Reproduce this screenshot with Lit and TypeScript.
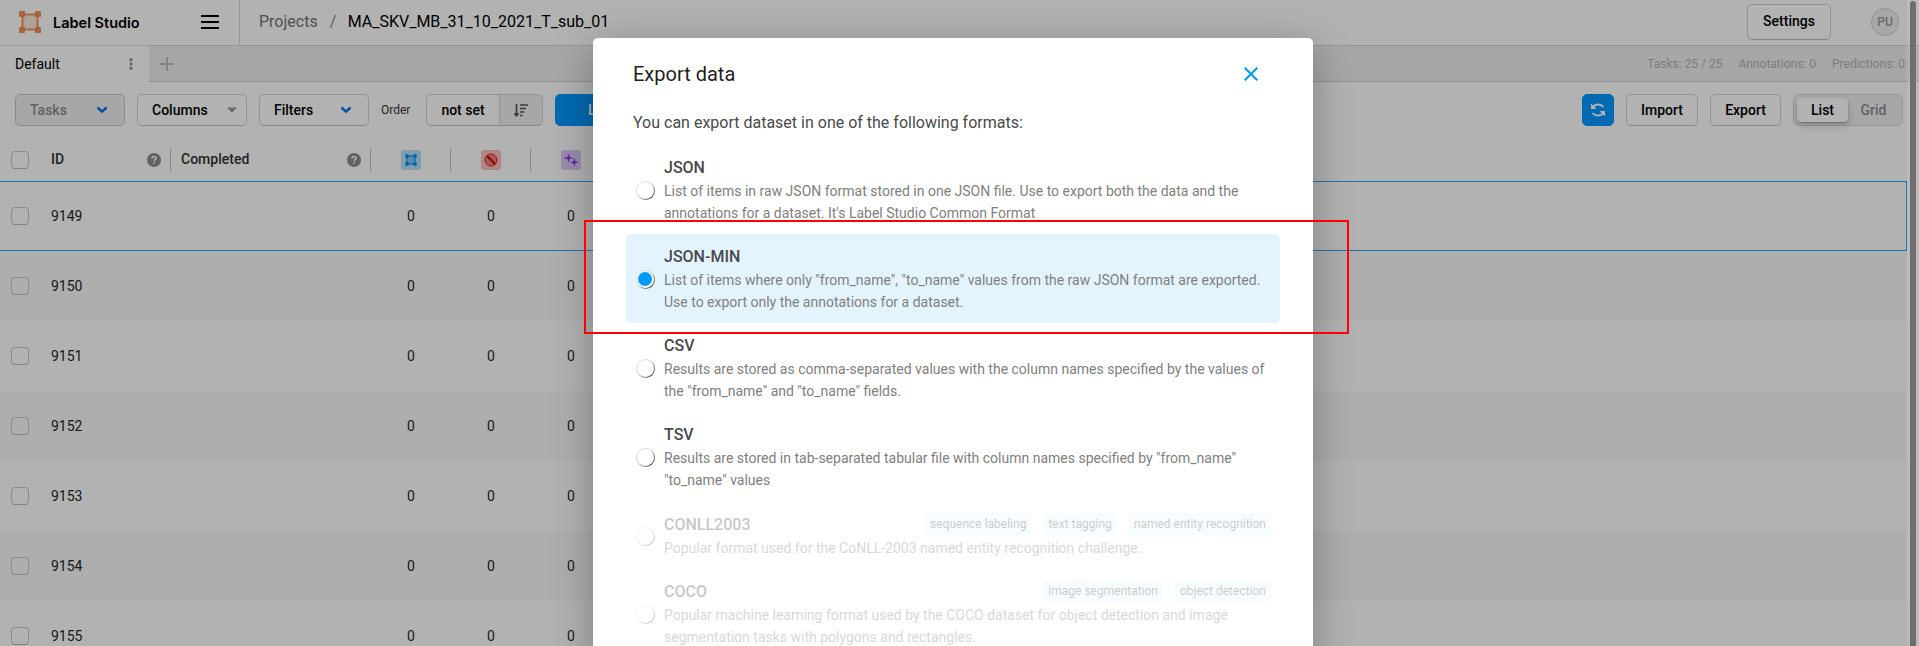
import { LitElement, html, css, svg, nothing } from "lit";
import { customElement, property } from "lit/decorators.js";

const chevron = html`<svg width="12" height="8" viewBox="0 0 12 8"><path d="M1.500 1.500 6 5.600 10.500 1.500" fill="none" stroke="#0070ff" stroke-width="2.500"/></svg>`;
const caret = html`<svg width="10" height="6" viewBox="0 0 10 6"><path d="M1 .5h8a.5.5 0 0 1 .3.8L5.6 5a.9.9 0 0 1-1.2 0L.7 1.3A.5.5 0 0 1 1 .5z" fill="#999"/></svg>`;
const help = html`<svg width="14" height="14" viewBox="0 0 14 14"><circle cx="7" cy="7" r="7" fill="#8c8c8c"/><path d="M4.900 5.400C4.900 4.100 5.800 3.400 7 3.400s2.100.8 2.100 1.900C9.100 6.700 7.100 6.700 7.100 8.300" fill="none" stroke="#fff" stroke-width="1.500"/><rect x="6.300" y="9.300" width="1.600" height="1.600" fill="#fff"/></svg>`;

const regionMark = (stroke: string, fill: string) => svg`
  <rect x="3.500" y="3.500" width="15" height="15" fill=${fill} stroke=${stroke} stroke-width="2"/>
  <g fill=${stroke}><rect x="0" y="0" width="6" height="6" rx="1"/><rect x="16" y="0" width="6" height="6" rx="1"/><rect x="0" y="16" width="6" height="6" rx="1"/><rect x="16" y="16" width="6" height="6" rx="1"/></g>`;

@customElement("format-option")
class FormatOption extends LitElement {
  @property() name = "";
  @property() description = "";
  @property({ type: Array }) tags: string[] = [];
  @property({ type: Boolean, reflect: true }) selected = false;
  @property({ type: Boolean, reflect: true }) disabled = false;

  static styles = css`
    :host { display: grid; grid-template-columns: 20px 1fr; column-gap: 8px; align-items: center; padding: 10px 9px 10px 10px; border-radius: 5px; }
    :host([selected]) { background: #e3f4ff; }
    :host([disabled]) { opacity: 0.3; }
    .radio { width: 19px; height: 19px; margin-top: 2px; border-radius: 50%; box-sizing: border-box; padding: 1px; background: linear-gradient(135deg, #e4e4e4 15%, #cfcfcf 50%, #4a4a4a 85%); }
    .well { width: 17px; height: 17px; border-radius: 50%; background: #fff; box-sizing: border-box; padding: 1px; }
    .dot { width: 14px; height: 14px; border-radius: 50%; background: #0099ff; }
    .head { display: flex; justify-content: space-between; align-items: center; height: 25.100px; }
    .title { font-size: 16px; font-weight: 500; color: #4a4a4a; }
    .tags { display: flex; gap: 12px; }
    .tag { font-size: 12px; line-height: 22px; height: 22px; padding: 0 5px; background: #e3f7ff; border-radius: 2px; color: #595959; }
    .desc { font-size: 14px; line-height: 22px; color: #808080; }
  `;

  render() {
    return html`
      <div class="radio"><div class="well">${this.selected ? html`<div class="dot"></div>` : nothing}</div></div>
      <div>
        <div class="head">
          <div class="title">${this.name}</div>
          <div class="tags">${this.tags.map((t) => html`<span class="tag">${t}</span>`)}</div>
        </div>
        <div class="desc">${this.description}</div>
      </div>`;
  }
}

const formats = [
  { name: "JSON", description: "List of items in raw JSON format stored in one JSON file. Use to export both the data and the annotations for a dataset. It's Label Studio Common Format" },
  { name: "JSON-MIN", description: 'List of items where only "from_name", "to_name" values from the raw JSON format are exported. Use to export only the annotations for a dataset.', selected: true },
  { name: "CSV", description: 'Results are stored as comma-separated values with the column names specified by the values of the "from_name" and "to_name" fields.' },
  { name: "TSV", description: 'Results are stored in tab-separated tabular file with column names specified by "from_name" "to_name" values' },
  { name: "CONLL2003", description: "Popular format used for the CoNLL-2003 named entity recognition challenge.", tags: ["sequence labeling", "text tagging", "named entity recognition"], disabled: true },
  { name: "COCO", description: "Popular machine learning format used by the COCO dataset for object detection and image segmentation tasks with polygons and rectangles.", tags: ["image segmentation", "object detection"], disabled: true },
];

@customElement("app-root")
class AppRoot extends LitElement {
  static styles = css`
    :host { display: block; position: relative; width: 100%; height: 646px; overflow: hidden; background: #fff; font-family: Roboto, "Liberation Sans", sans-serif; color: #000; }
    * { box-sizing: border-box; }
    svg { display: block; flex: none; }
    .header { display: flex; height: 46px; border-bottom: 1px solid #dadada; align-items: center; padding-right: 20px; }
    .brand { width: 240px; height: 45px; border-right: 1px solid #d6d6d6; display: flex; align-items: center; padding: 0 20px 1px 19px; }
    .brand-name { font-family: Inter, sans-serif; font-weight: 600; font-size: 14.500px; margin-left: 12px; flex: 1; }
    .crumbs { flex: 1; display: flex; font-size: 16px; padding-left: 19px; padding-bottom: 2px; }
    .crumb-muted { color: #757575; }
    .slash { width: 31px; text-align: center; color: #8c8c8c; margin-right: -1px; }
    .btn { height: 32px; border: 1px solid #d2d2d2; border-bottom-color: #bfbfbf; border-radius: 5px; font-size: 14px; font-weight: 500; display: flex; align-items: center; justify-content: center; background: #fff; }
    .settings { width: 84px; height: 36px; margin-right: 40px; margin-top: -1px; padding-bottom: 2px; }
    .user { width: 28px; height: 28px; border-radius: 50%; border: 1px solid #d0d0d0; background: #efefef; color: #999; font-size: 12px; font-weight: 500; display: flex; align-items: center; justify-content: center; margin-top: -1px; }
    .tabs { display: flex; height: 36px; background: #f0f0f0; }
    .tab { width: 149px; background: #fff; display: flex; align-items: center; justify-content: space-between; padding: 0 16px 0 15px; font-size: 14px; }
    .tabs-rest { flex: 1; border-bottom: 1px solid #d2d2d2; display: flex; align-items: center; padding: 1px 14px 0 11px; font-size: 12px; color: #b3b3b3; gap: 16px; }
    .push { margin-left: auto; }
    .toolbar { display: flex; gap: 12px; padding: 12px 16px 12px 15px; align-items: center; }
    .drop { width: 110px; justify-content: space-between; padding: 0 16px 0 14px; }
    .caret-drop { padding-right: 9px; }
    .muted { background: #f0f0f0; color: #8c8c8c; border-color: #c8c8c8; }
    .order { font-size: 12px; color: #333; width: 33px; }
    .group { display: flex; width: 117px; }
    .group-main { width: 73px; border-right: 0; border-radius: 5px 0 0 5px; }
    .group-side { width: 44px; border-radius: 0 5px 5px 0; background: #f0f0f0; }
    .primary { background: #0099ff; border-color: #0099ff; color: #fff; }
    .label-btn { width: 160px; justify-content: flex-start; padding-left: 32px; }
    .refresh { width: 32px; margin-left: auto; }
    .import { width: 72px; }
    .export { width: 71px; }
    .toggle { width: 110px; height: 32px; border: 1px solid #dadada; border-radius: 6px; background: #f0f0f0; display: flex; padding: 3px; font-size: 14px; font-weight: 500; }
    .toggle-on { width: 51px; height: 24px; background: #fff; border-radius: 4px; box-shadow: 0 1px 2px rgba(0,0,0,.25), 0 4px 8px rgba(0,0,0,.15); text-align: center; line-height: 24px; }
    .toggle-off { flex: 1; text-align: center; line-height: 24px; color: #8c8c8c; }
    .table { width: 1907px; }
    .row { display: grid; grid-template-columns: 40px 131px 200px 80px 80px 80px 1fr; align-items: center; height: 70px; font-size: 14px; color: #262626; }
    .row:nth-child(odd) { background: #fafafa; }
    .row.current { background: #fff; border: 1px solid #2da8ff; border-left: 0; }
    .row.head { height: 43px; background: #fff; font-weight: 500; color: #333; }
    .box { width: 18px; height: 18px; border: 1px solid #cbcbcb; border-bottom-color: #bdbdbd; border-radius: 4px; margin-left: 11px; }
    .id { padding-left: 11px; }
    .num { text-align: center; }
    .cell { display: flex; align-items: center; justify-content: space-between; height: 22px; padding: 0 9px 0 11px; border-right: 1px solid #bfbfbf; }
    .cell.wide { padding-left: 10px; }
    .cell span { padding-bottom: 2px; }
    .icon-cell { justify-content: center; padding: 0; }
    .icon-cell:last-child { border-right: 0; }
    .badge { width: 20px; height: 20px; border-radius: 3px; display: flex; align-items: center; justify-content: center; }
    .b-blue { background: #b8e1fc; }
    .b-red { background: #fbbfbf; }
    .b-violet { background: #ddc8fb; }
    .shade { position: absolute; inset: 0; background: rgba(0,0,0,.3); }
    .scroll { position: absolute; top: 0; right: 0; bottom: 0; width: 12px; background: rgba(255,255,255,.12); }
    .thumb { margin: 1px 3px 0 3px; height: 660px; border-radius: 3px; background: #6e6e6e; }
    .modal { position: absolute; left: 593px; top: 38px; width: 720px; height: 640px; border-radius: 5px; background: #fff; box-shadow: 0 10px 42px rgba(0,0,0,.3); }
    .modal-head { display: flex; justify-content: space-between; align-items: center; padding: 0 55px 0 40px; height: 72px; font-size: 20px; color: #1f1f1f; }
    .lead { font-size: 16px; line-height: 24px; color: #4a4a4a; padding: 1px 40px 0; }
    .options { padding: 10.100px 33px 0; }
    .callout { position: absolute; left: 584px; top: 220px; width: 765px; height: 114px; border: 2px solid #f00; }
  `;

  render() {
    return html`
      <div class="header">
        <div class="brand">
          <svg width="22" height="22" viewBox="0 0 22 22">${regionMark("#ee9058", "#fbe6da")}</svg>
          <span class="brand-name">Label Studio</span>
          <svg width="18" height="14" viewBox="0 0 18 14"><path d="M0 1h18M0 7h18M0 13h18" stroke="#000" stroke-width="2"/></svg>
        </div>
        <div class="crumbs"><span class="crumb-muted">Projects</span><span class="slash">/</span><span>MA_SKV_MB_31_10_2021_T_sub_01</span></div>
        <div class="btn settings">Settings</div>
        <div class="user">PU</div>
      </div>
      <div class="tabs">
        <div class="tab"><span>Default</span><svg width="4" height="12" viewBox="0 0 4 12" fill="#999"><circle cx="2" cy="1.700" r="1.700"/><circle cx="2" cy="6" r="1.700"/><circle cx="2" cy="10.300" r="1.700"/></svg></div>
        <div class="tabs-rest">
          <svg width="14" height="14" viewBox="0 0 14 14"><path d="M7 0v14M0 7h14" stroke="#bfbfbf" stroke-width="2"/></svg>
          <span class="push">Tasks: 25 / 25</span><span>Annotations: 0</span><span>Predictions: 0</span>
        </div>
      </div>
      <div class="toolbar">
        <div class="btn drop muted">Tasks ${chevron}</div>
        <div class="btn drop caret-drop">Columns ${caret}</div>
        <div class="btn drop">Filters ${chevron}</div>
        <div class="order">Order</div>
        <div class="group">
          <div class="btn group-main">not set</div>
          <div class="btn group-side"><svg width="14" height="13" viewBox="0 0 14 13"><path d="M2.500 0v11.500M.3 9.300l2.200 2.400 2.200-2.400M6 1h8M6 4.500h6M6 8h4.200M6 11.500h2.500" fill="none" stroke="#555" stroke-width="1.700"/></svg></div>
        </div>
        <div class="btn primary label-btn">L</div>
        <div class="btn primary refresh"><svg width="14" height="14" viewBox="0 0 14 14"><path d="M1.500 5C3 .8 9.500.2 12.500 4M12.500 9C11 13.200 4.500 13.800 1.500 10" fill="none" stroke="#fff" stroke-width="1.900"/><path d="M0 .5V6h5.500zM14 13.500V8H8.500z" fill="#fff"/></svg></div>
        <div class="btn import">Import</div>
        <div class="btn export">Export</div>
        <div class="toggle"><div class="toggle-on">List</div><div class="toggle-off">Grid</div></div>
      </div>
      <div class="table">
        <div class="row head">
          <div class="box"></div>
          <div class="cell"><span>ID</span> ${help}</div>
          <div class="cell wide"><span>Completed</span> ${help}</div>
          <div class="cell icon-cell"><div class="badge b-blue"><svg width="12" height="12" viewBox="0 0 12 12"><rect x="2" y="2" width="8" height="8" fill="#7cc8fa" stroke="#0a8fe8" stroke-width="1.200"/><g fill="#0a8fe8"><circle cx="2" cy="2" r="2"/><circle cx="10" cy="2" r="2"/><circle cx="2" cy="10" r="2"/><circle cx="10" cy="10" r="2"/></g></svg></div></div>
          <div class="cell icon-cell"><div class="badge b-red"><svg width="14" height="14" viewBox="0 0 14 14"><circle cx="7" cy="7" r="6" fill="#f08080" stroke="#dd2222" stroke-width="1"/><path d="M2.800 2.800l8.400 8.400" stroke="#d40000" stroke-width="2.200"/></svg></div></div>
          <div class="cell icon-cell"><div class="badge b-violet"><svg width="14" height="12" viewBox="0 0 14 12" fill="#7f35e8"><path d="M4.500 0 5.300 3.200 8.500 4 5.300 4.800 4.500 8 3.700 4.800.5 4 3.700 3.200zM10.300 4.500 11 7.500l3 .7-3 .7-.7 3-.7-3-3-.7 3-.7z" stroke="#7f35e8" stroke-width=".5"/></svg></div></div>
        </div>
        ${[9149, 9150, 9151, 9152, 9153, 9154, 9155].map((id, i) => html`
          <div class="row ${i === 0 ? "current" : ""}">
            <div class="box"></div><div class="id">${id}</div><div></div>
            <div class="num">0</div><div class="num">0</div><div class="num">0</div>
          </div>`)}
      </div>
      <div class="shade"></div>
      <div class="scroll"><div class="thumb"></div></div>
      <div class="modal">
        <div class="modal-head"><span>Export data</span><svg width="14" height="14" viewBox="0 0 14 14"><path d="M.7.7l12.600 12.600M13.300.7.7 13.300" stroke="#0099ff" stroke-width="2"/></svg></div>
        <div class="lead">You can export dataset in one of the following formats:</div>
        <div class="options">
          ${formats.map((f) => html`<format-option .name=${f.name} .description=${f.description} .tags=${f.tags ?? []} ?selected=${!!f.selected} ?disabled=${!!f.disabled}></format-option>`)}
        </div>
      </div>
      <div class="callout"></div>`;
  }
}
